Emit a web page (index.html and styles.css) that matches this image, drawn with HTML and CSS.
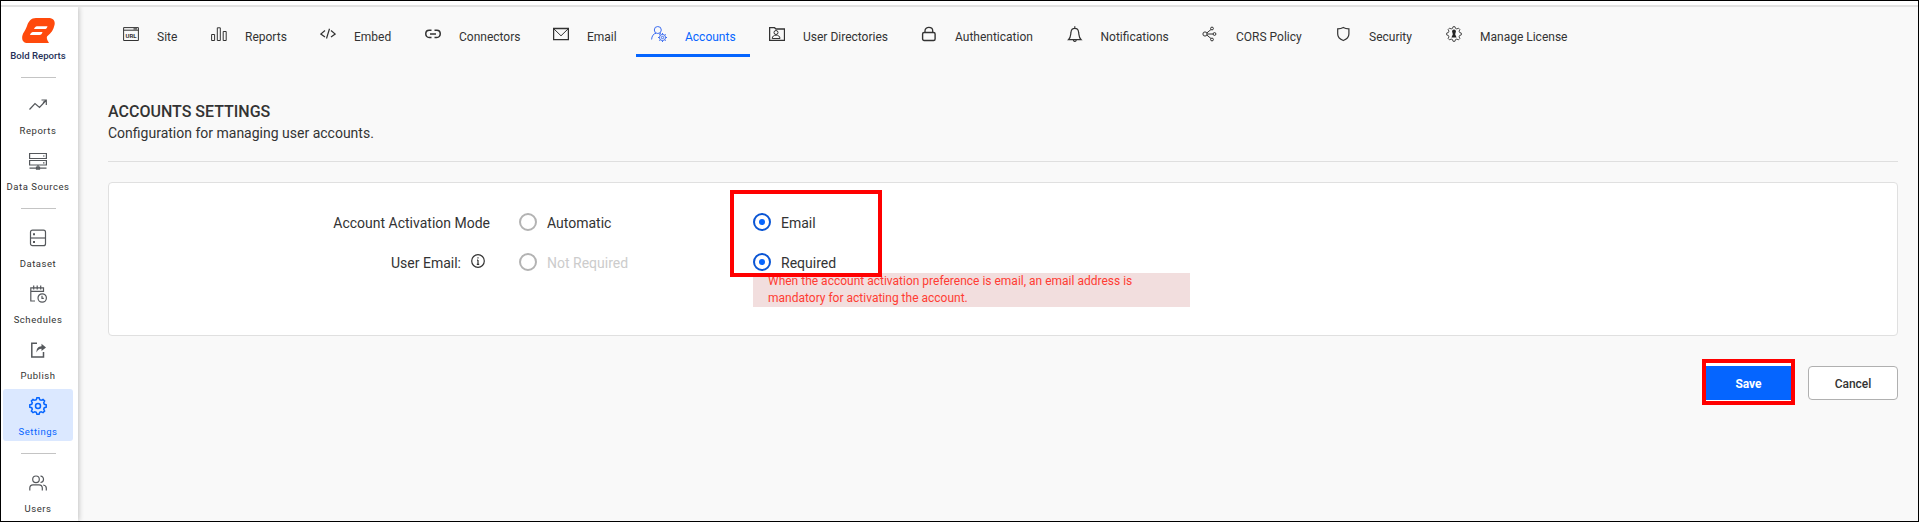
FILE: index.html
```html
<!DOCTYPE html>
<html lang="en">
<head>
<meta charset="utf-8">
<title>Bold Reports - Accounts Settings</title>
<link rel="stylesheet" href="styles.css">
</head>
<body>
<div class="app">
  <div class="topbar"></div>
  <div class="layout">
    <aside class="sidebar">
      <a class="brand">
        <svg class="brand-mark" width="33" height="26" viewBox="0 0 33 26"><path fill="#ff4a0c" d="M14 0H26C31 0 33.500 2.500 32.500 7C31.500 11.500 29.500 15 25 18.500C24.500 20.500 25 22 27 25H6C1 25 -.3 22 .3 18C1 14.500 3.500 12.500 5 8C6.500 3.500 9 0 14 0Z"/><path fill="#fff" d="M15 8.200H25.500C25 10.200 24 11 22.500 11H12C12.500 9.500 13.500 8.500 15 8.200ZM11 14H20.500C20 16 19 17 17.500 17H8C8.500 15.200 9.500 14.200 11 14Z"/></svg>
        <span class="brand-name">Bold Reports</span>
      </a>
      <hr class="rule">
      <a class="item"><svg class="side-icon" viewBox="0 0 18 18"><path d="M.5 13.500 6 7.500 10.500 11.500 17 4.500M12.500 4H17.300V9M14 6.500l3-2"/></svg><span>Reports</span></a>
      <a class="item"><svg class="side-icon" viewBox="0 0 18 18"><path d="M.6 1.500H17.400V6.500H.6ZM.6 8.500H17.400V13H.6ZM9 13v4M.5 16.200H17.500M14 4h1.500M14 10.800h1.500"/><path d="M7.500 15.200h3v2h-3z"/></svg><span>Data Sources</span></a>
      <hr class="rule">
      <a class="item"><svg class="side-icon" viewBox="0 0 18 18"><rect x="1.500" y="1.200" width="15" height="15.500" rx="2"/><path d="M1.500 9h15"/><path d="M5 4.200v2M5 12v2" stroke-width="2"/></svg><span>Dataset</span></a>
      <a class="item"><svg class="side-icon" viewBox="0 0 18 18"><path d="M6 16H1.800V2.800H14.500V7M1.800 6.400H14.500M4.700.5v4M8.200.5v4M11.700.5v4"/><circle cx="13.200" cy="13" r="4.200"/><path d="M13 10.800v2.500h1.800"/></svg><span>Schedules</span></a>
      <a class="item"><svg class="side-icon" viewBox="0 0 18 18"><path d="M8 2.300H2.800V16H14.500V11" stroke-width="1.500"/><path d="M7.500 11.500C7.500 7.500 9 5.500 12.500 5.300V2.800L17 6.500 12.500 10V7.800C10 7.800 8.800 9 7.500 11.500Z" fill="#55585c" stroke="none"/></svg><span>Publish</span></a>
      <a class="item item-active"><svg class="side-icon" viewBox="0 0 18 18"><path stroke-width="1.500" d="M7.3 2.700 7.900.8h2.200l.6 1.900 1.500.6 1.800-.9 1.600 1.600-.9 1.800.6 1.500 1.900.6v2.200l-1.900.6-.6 1.500.9 1.800-1.600 1.600-1.800-.9-1.500.6-.6 1.900H7.900l-.6-1.900-1.500-.6-1.800.9L2.400 14l.9-1.800-.6-1.500-1.900-.6V7.900l1.900-.6.6-1.500L2.400 4 4 2.400l1.800.9Z"/><circle cx="9" cy="9" r="2.500" stroke-width="1.500"/></svg><span>Settings</span></a>
      <hr class="rule">
      <a class="item"><svg class="side-icon" viewBox="0 0 18 18"><circle cx="7" cy="5.300" r="3.300"/><path d="M.8 16.500V14C.8 11.800 2.200 10.800 4 10.800H10C12 10.800 13.300 12 13.300 14V16.500M11.500 2.200C15.500 2 15.500 8.500 11.500 8.500M14.200 11C16.400 11.300 17.300 12.400 17.300 14V16.500"/></svg><span>Users</span></a>
    </aside>
    <main class="content">
      <nav class="tabs">
        <a class="tab"><svg class="tab-icon" viewBox="0 0 16 16"><path d="M.6 1.600H15.400V14.500H.6ZM.6 4.200H15.400" /><path d="M10.500 2.900h3.500" stroke-width="1.200"/><text x="8" y="12.200" class="url-text">URL</text></svg><span>Site</span></a>
        <a class="tab"><svg class="tab-icon" viewBox="0 0 16 16"><path d="M.6 8.500h3V14.500h-3ZM6.300 1.800h3V14.500h-3ZM12.200 5.500h3V14.500h-3Z"/></svg><span>Reports</span></a>
        <a class="tab"><svg class="tab-icon" viewBox="0 0 16 16"><path stroke-width="1.200" d="M5 4.500.8 8 5 11M11 4.500 15.200 8 11 11M9.500 2.800 6.500 12.500"/></svg><span>Embed</span></a>
        <a class="tab"><svg class="tab-icon" viewBox="0 0 16 16"><path stroke-width="1.500" d="M6.500 4.200H4.200C-.4 4.200-.4 11.500 4.200 11.500H6.500M9.500 4.200h2.300C16.400 4.200 16.400 11.500 11.800 11.500H9.500M5 7.900h6"/></svg><span>Connectors</span></a>
        <a class="tab"><svg class="tab-icon" viewBox="0 0 16 16"><path d="M.6 2.500H15.400V13.700H.6Z" stroke-width="1.300"/><path d="M.8 2.800 8 9.800 15.200 2.800"/></svg><span>Email</span></a>
        <a class="tab tab-active"><svg class="tab-icon" viewBox="0 0 16 16"><circle cx="6.800" cy="4" r="3.500"/><path d="M.6 13.500C.8 10 2.500 7.600 5 7.300M8.500 7.300l1.500.6"/><circle cx="11.500" cy="11.500" r="3.100"/><circle cx="11.500" cy="11.500" r="1.200"/><path d="M11.500 7v1.400M11.500 14.600V16M7 11.500h1.400M14.600 11.500H16M8.300 8.300l1 1M13.700 13.700l1 1M8.300 14.700l1-1M13.700 9.300l1-1"/></svg><span>Accounts</span></a>
        <a class="tab"><svg class="tab-icon" viewBox="0 0 16 16"><path stroke-width="1.300" d="M.6 14.300V1.700H5.500L7 3H15.500V14.300Z"/><circle cx="7" cy="6.500" r="2"/><path d="M3.200 12.500C3.200 8 11 8 11 12.500Z"/></svg><span>User Directories</span></a>
        <a class="tab"><svg class="tab-icon" viewBox="0 0 16 16"><rect x="1.600" y="6.500" width="12.500" height="8" rx="1.500" stroke-width="1.400"/><path stroke-width="1.300" d="M4 6.500V4.800C4 .2 11.700.2 11.700 4.800V6.500"/></svg><span>Authentication</span></a>
        <a class="tab"><svg class="tab-icon" viewBox="0 0 16 16"><path stroke-width="1.200" d="M1.500 13.700C3.800 11.500 3.500 9.500 4 6.200 4.500 1.200 11.100 1.200 11.600 6.200 12.100 9.500 11.800 11.500 14.100 13.700ZM6.300 14C6.500 15.900 9.100 15.900 9.300 14M7.800 2.500V.3"/></svg><span>Notifications</span></a>
        <a class="tab"><svg class="tab-icon" viewBox="0 0 16 16"><circle cx="3" cy="8" r="2.100"/><circle cx="10" cy="2.500" r="1.400"/><circle cx="12.500" cy="8" r="1.400"/><circle cx="10" cy="13.500" r="1.400"/><path d="M4.800 7 9 3.500M5.100 8h6M4.800 9 9 12.500"/></svg><span>CORS Policy</span></a>
        <a class="tab"><svg class="tab-icon" viewBox="0 0 16 16"><path stroke-width="1.200" d="M8.300 1.500C10.500 2.700 12 2.800 13.900 2.900V8C13.900 11 11.500 13.300 8.300 14.500 5.100 13.300 2.700 11 2.700 8V2.900C4.600 2.800 6.100 2.700 8.300 1.500Z"/></svg><span>Security</span></a>
        <a class="tab"><svg class="tab-icon" viewBox="0 0 18 18"><path d="M7.300 2.700 7.900.8h2.200l.6 1.900 1.500.6 1.800-.9 1.600 1.600-.9 1.800.6 1.500 1.900.6v2.200l-1.900.6-.6 1.500.9 1.800-1.600 1.600-1.800-.9-1.500.6-.6 1.900H7.900l-.6-1.900-1.500-.6-1.800.9L2.400 14l.9-1.800-.6-1.500-1.900-.6V7.900l1.900-.6.6-1.500L2.400 4 4 2.400l1.800.9Z"/><path fill="#222" stroke="none" d="M6.800 6.200a2.200 2.200 0 0 1 4.400 0L10.300 9.200l1.600 3.600H6.100L7.700 9.200Z"/></svg><span>Manage License</span></a>
      </nav>
      <header class="page-head">
        <h1 class="page-title">ACCOUNTS SETTINGS</h1>
        <p class="page-desc">Configuration for managing user accounts.</p>
      </header>
      <section class="card">
        <div class="row">
          <div class="row-label">Account Activation Mode</div>
          <label class="option"><span class="radio"></span><span class="option-text">Automatic</span></label>
          <label class="option"><span class="radio radio-on"></span><span class="option-text">Email</span></label>
        </div>
        <div class="row">
          <div class="row-label row-label-info">User Email:<svg class="info" viewBox="0 0 14 14"><circle cx="7" cy="7" r="6.300"/><path d="M7 6v4.500M6 6.200h1M5.800 10.300h2.400M7 3.300v1.300"/></svg></div>
          <label class="option option-disabled"><span class="radio"></span><span class="option-text">Not Required</span></label>
          <label class="option"><span class="radio radio-on"></span><span class="option-text">Required</span></label>
        </div>
        <div class="notice">When the account activation preference is email, an email address is mandatory for activating the account.</div>
        <div class="highlight highlight-options"></div>
      </section>
      <div class="actions">
        <div class="save-wrap"><button class="btn btn-primary">Save</button><div class="highlight highlight-save"></div></div>
        <button class="btn btn-plain">Cancel</button>
      </div>
    </main>
  </div>
</div>
</body>
</html>
```
FILE: styles.css
```css
* { box-sizing: border-box; }
body { margin: 0; font-family: Roboto, "Liberation Sans", sans-serif; color: #333; }
.app { width: 1919px; height: 522px; border: 1px solid #000; display: flex; flex-direction: column; overflow: hidden; background: #f9f9f9; }
.topbar { height: 6px; flex: none; background: #fff; border-bottom: 2px solid #e2e2e2; }
.layout { display: flex; flex: 1; min-height: 0; }

.sidebar { width: 77px; flex: none; background: #fff; box-shadow: 1px 0 5px rgba(0, 0, 0, .22); display: flex; flex-direction: column; padding-top: 11px; clip-path: inset(0 -8px 0 0); }
.brand { display: flex; flex-direction: column; align-items: center; height: 59px; flex: none; padding-right: 3px; }
.brand-mark { flex: none; }
.brand-name { margin-top: 5px; font-size: 9.6px; line-height: 14px; font-weight: 500; color: #263159; white-space: nowrap; }
.rule { flex: none; width: 35px; height: 1px; margin: 12px 0 12px 20px; border: 0; background: #c4c4c4; }
.brand + .rule { margin: 0 0 10px 20px; }
.item { flex: none; width: 70px; height: 52px; margin-left: 2px; padding-top: 8px; border-radius: 3px; display: flex; flex-direction: column; align-items: center; font-size: 9.5px; letter-spacing: .55px; line-height: 14px; color: #333; }
.item + .item { margin-top: 4px; }
.item span { margin-top: 10px; white-space: nowrap; }
.item-active { background: #dbe8ff; color: #0565ff; }
.side-icon { width: 18px; height: 18px; flex: none; fill: none; stroke: #55585c; stroke-width: 1.2; }
.item-active .side-icon { stroke: #0565ff; }

.content { flex: 1; padding: 0 20px 0 30px; min-width: 0; }
.tabs { display: grid; height: 50px; grid-template-columns: 88px 109px 105px 128px 98px 118px 152px 145.500px 135.500px 133px 111px 140px; }
.tab { display: flex; align-items: center; justify-self: start; gap: 18px; height: 50px; padding: 18px 15px 6px; font-size: 12px; line-height: 16px; white-space: nowrap; border-bottom: 3px solid transparent; }
.tab-icon { width: 16px; height: 16px; margin-bottom: 6px; flex: none; fill: none; stroke: #333; stroke-width: 1; }
.tab-active { color: #0565ff; border-bottom-color: #0565ff; padding-right: 14px; }
.tab-active .tab-icon { stroke: #3d6df0; }
.url-text { font: 700 6px Roboto, sans-serif; fill: #333; stroke: none; text-anchor: middle; }

.page-head { margin-top: 44px; height: 61px; border-bottom: 1px solid #dfdfdf; }
.page-title { margin: 0; font-size: 16px; line-height: 20px; font-weight: 500; padding-top: 1px; }
.page-desc { margin: 1px 0 0; font-size: 14px; line-height: 20px; }

.card { position: relative; margin-top: 20px; height: 154px; padding: 19px 0 0 15px; background: #fff; border: 1px solid #e0e0e0; border-radius: 4px; }
.row { display: grid; grid-template-columns: 366px 263px 263px; height: 40px; align-items: center; font-size: 14px; line-height: 20px; }
.row-label { display: flex; justify-content: flex-end; align-items: center; padding: 1px 0 0 0; }
.row-label-info { padding-right: 5px; }
.info { width: 14px; height: 14px; margin: -3px 0 0 10px; fill: none; stroke: #333; stroke-width: 1.200; }
.option { display: flex; align-items: center; gap: 10px; }
.option-text { padding-top: 1px; }
.option:nth-child(2) { padding-left: 29px; }
.option-disabled { color: #ccc; }
.radio { width: 18px; height: 18px; flex: none; border: 2px solid #b3b3b3; border-radius: 50%; display: grid; place-items: center; }
.radio-on { border-color: #0a55d4; }
.radio-on::after { content: ""; width: 6px; height: 6px; border-radius: 50%; background: #0565ff; }
.notice { width: 437px; height: 34px; margin: -9px 0 0 629px; padding-left: 15px; background: #f2dede; color: #ff3c33; font-size: 12px; line-height: 17px; }
.highlight { position: absolute; border: 4px solid #f00; }
.highlight-options { left: 621px; top: 7px; width: 152px; height: 87px; }

.actions { display: flex; justify-content: flex-end; gap: 17px; margin-top: 30px; }
.save-wrap { position: relative; width: 85px; display: flex; }
.btn { height: 34px; padding: 2px 0 0; font: 500 12px/16px Roboto, "Liberation Sans", sans-serif; }
.btn-primary { width: 85px; border: 0; background: #0565ff; color: #fff; font-weight: 700; box-shadow: 0 -3px #fff, 0 1px #fff; }
.btn-plain { width: 90px; border: 1px solid #b0b0b0; border-radius: 4px; background: #fff; color: #333; }
.highlight-save { left: -4px; top: -7px; width: 93px; height: 46px; }
```
